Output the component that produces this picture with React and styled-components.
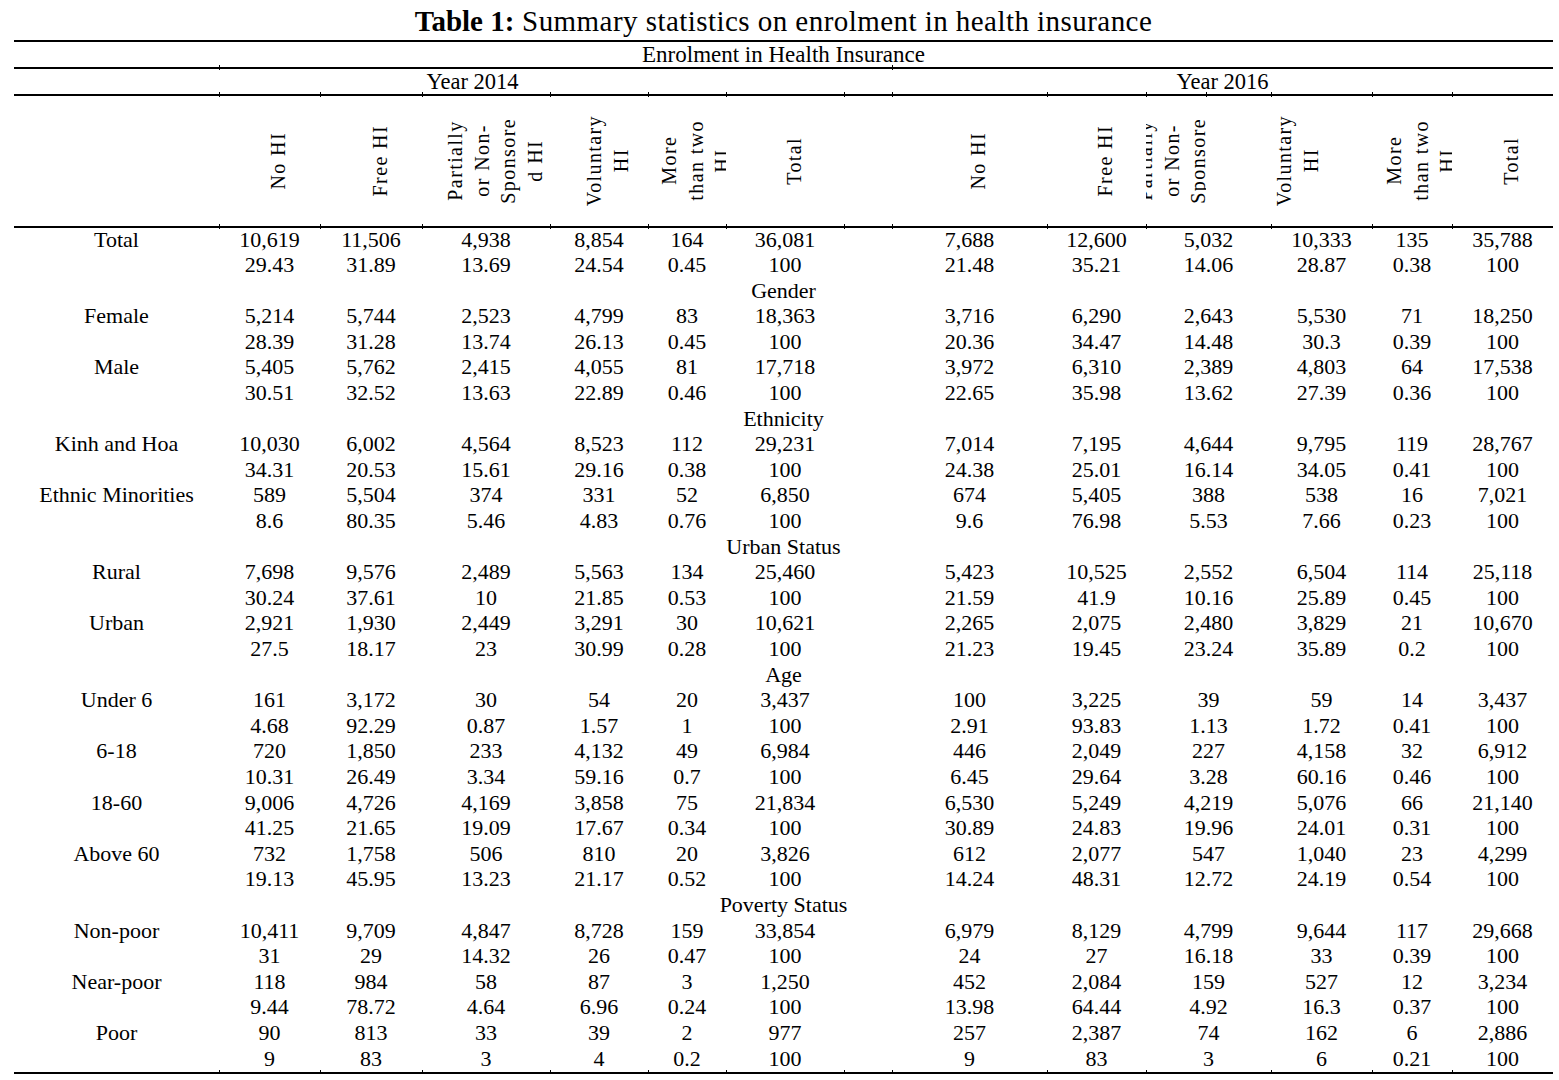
import styled, { createGlobalStyle } from 'styled-components';

const GlobalStyle = createGlobalStyle`
  body {
    margin: 0;
    background: #ffffff;
    color: #000000;
    font-family: 'Liberation Serif', 'Times New Roman', serif;
  }
`;

const DATA_COLS = [205, 101, 102, 128, 98, 78, 118, 48, 155, 99, 125, 101, 80, 101];
const HEAD_COLS = [205, 101, 102, 128, 98, 78, 118, 48, 155, 99, 60, 166, 80, 101];
const HEAD_RULE = [205, 101, 102, 128, 98, 78, 118, 48, 155, 99, 60, 65, 101, 80, 101];
const YEAR_COLS = [205, 507, 166, 661];
const YEAR_RULE = [205, 673, 661];

const toTemplate = (cols) => cols.map((w) => `${w}px`).join(' ');

const Page = styled.div`
  box-sizing: border-box;
  width: 1553px;
  padding-left: 14px;
`;

const Title = styled.div`
  box-sizing: border-box;
  height: 40px;
  padding-top: 7px;
  margin-left: -14px;
  width: 1567px;
  text-align: center;
  font-size: 29px;
  line-height: 29px;
  letter-spacing: 0.45px;
  white-space: nowrap;

  b {
    font-weight: 700;
    letter-spacing: 0;
  }
`;

const RuleBar = styled.div`
  display: grid;
  grid-template-columns: ${(p) => p.$template};
  height: 1.5px;
  background: #000;
`;

const Tick = styled.span`
  align-self: start;
  height: 5px;
  margin-top: -2px;
  border-left: 1px solid ${(p) => (p.$on ? '#000' : 'transparent')};
`;

const Rule = ({ cuts }) => (
  <RuleBar $template={toTemplate(cuts)}>
    {cuts.map((w, i) => (
      <Tick key={i} $on={i > 0} />
    ))}
  </RuleBar>
);

const SpanRow = styled.div`
  height: 25.5px;
  line-height: 25.5px;
  text-align: center;
  font-size: 23px;
`;

const YearRow = styled.div`
  display: grid;
  grid-template-columns: ${toTemplate(YEAR_COLS)};
  height: 25.5px;
  line-height: 25.5px;
  font-size: 22.5px;
  text-align: center;
`;

const HeadRow = styled.div`
  display: grid;
  grid-template-columns: ${toTemplate(HEAD_COLS)};
  height: 130.5px;
`;

const HeadCell = styled.div`
  box-sizing: border-box;
  display: flex;
  justify-content: center;
  align-items: center;
  overflow: hidden;
  padding-left: 18px;
`;

const Rotated = styled.div`
  flex-shrink: 0;
  writing-mode: vertical-rl;
  transform: rotate(180deg);
  text-align: center;
  font-size: 20px;
  line-height: 26.6px;
  letter-spacing: 1.4px;
  white-space: nowrap;
`;

const DataRow = styled.div`
  box-sizing: border-box;
  display: grid;
  grid-template-columns: ${toTemplate(DATA_COLS)};
  height: 25.6px;
  padding-bottom: 2px;
  line-height: 23.6px;
  font-size: 22px;
`;

const Cell = styled.div`
  text-align: center;
  white-space: nowrap;
`;

const SectionRow = styled.div`
  box-sizing: border-box;
  height: 25.6px;
  padding-bottom: 2px;
  line-height: 23.6px;
  font-size: 22px;
  text-align: center;
`;

const headers = [
  ['No HI'],
  ['Free HI'],
  ['Partially', 'or Non-', 'Sponsore', 'd HI'],
  ['Voluntary', 'HI'],
  ['More', 'than two', 'HI'],
  ['Total'],
];

const rows = [
  { label: 'Total', a: ['10,619', '11,506', '4,938', '8,854', '164', '36,081'], b: ['7,688', '12,600', '5,032', '10,333', '135', '35,788'] },
  { a: ['29.43', '31.89', '13.69', '24.54', '0.45', '100'], b: ['21.48', '35.21', '14.06', '28.87', '0.38', '100'] },
  { section: 'Gender' },
  { label: 'Female', a: ['5,214', '5,744', '2,523', '4,799', '83', '18,363'], b: ['3,716', '6,290', '2,643', '5,530', '71', '18,250'] },
  { a: ['28.39', '31.28', '13.74', '26.13', '0.45', '100'], b: ['20.36', '34.47', '14.48', '30.3', '0.39', '100'] },
  { label: 'Male', a: ['5,405', '5,762', '2,415', '4,055', '81', '17,718'], b: ['3,972', '6,310', '2,389', '4,803', '64', '17,538'] },
  { a: ['30.51', '32.52', '13.63', '22.89', '0.46', '100'], b: ['22.65', '35.98', '13.62', '27.39', '0.36', '100'] },
  { section: 'Ethnicity' },
  { label: 'Kinh and Hoa', a: ['10,030', '6,002', '4,564', '8,523', '112', '29,231'], b: ['7,014', '7,195', '4,644', '9,795', '119', '28,767'] },
  { a: ['34.31', '20.53', '15.61', '29.16', '0.38', '100'], b: ['24.38', '25.01', '16.14', '34.05', '0.41', '100'] },
  { label: 'Ethnic Minorities', a: ['589', '5,504', '374', '331', '52', '6,850'], b: ['674', '5,405', '388', '538', '16', '7,021'] },
  { a: ['8.6', '80.35', '5.46', '4.83', '0.76', '100'], b: ['9.6', '76.98', '5.53', '7.66', '0.23', '100'] },
  { section: 'Urban Status' },
  { label: 'Rural', a: ['7,698', '9,576', '2,489', '5,563', '134', '25,460'], b: ['5,423', '10,525', '2,552', '6,504', '114', '25,118'] },
  { a: ['30.24', '37.61', '10', '21.85', '0.53', '100'], b: ['21.59', '41.9', '10.16', '25.89', '0.45', '100'] },
  { label: 'Urban', a: ['2,921', '1,930', '2,449', '3,291', '30', '10,621'], b: ['2,265', '2,075', '2,480', '3,829', '21', '10,670'] },
  { a: ['27.5', '18.17', '23', '30.99', '0.28', '100'], b: ['21.23', '19.45', '23.24', '35.89', '0.2', '100'] },
  { section: 'Age' },
  { label: 'Under 6', a: ['161', '3,172', '30', '54', '20', '3,437'], b: ['100', '3,225', '39', '59', '14', '3,437'] },
  { a: ['4.68', '92.29', '0.87', '1.57', '1', '100'], b: ['2.91', '93.83', '1.13', '1.72', '0.41', '100'] },
  { label: '6-18', a: ['720', '1,850', '233', '4,132', '49', '6,984'], b: ['446', '2,049', '227', '4,158', '32', '6,912'] },
  { a: ['10.31', '26.49', '3.34', '59.16', '0.7', '100'], b: ['6.45', '29.64', '3.28', '60.16', '0.46', '100'] },
  { label: '18-60', a: ['9,006', '4,726', '4,169', '3,858', '75', '21,834'], b: ['6,530', '5,249', '4,219', '5,076', '66', '21,140'] },
  { a: ['41.25', '21.65', '19.09', '17.67', '0.34', '100'], b: ['30.89', '24.83', '19.96', '24.01', '0.31', '100'] },
  { label: 'Above 60', a: ['732', '1,758', '506', '810', '20', '3,826'], b: ['612', '2,077', '547', '1,040', '23', '4,299'] },
  { a: ['19.13', '45.95', '13.23', '21.17', '0.52', '100'], b: ['14.24', '48.31', '12.72', '24.19', '0.54', '100'] },
  { section: 'Poverty Status' },
  { label: 'Non-poor', a: ['10,411', '9,709', '4,847', '8,728', '159', '33,854'], b: ['6,979', '8,129', '4,799', '9,644', '117', '29,668'] },
  { a: ['31', '29', '14.32', '26', '0.47', '100'], b: ['24', '27', '16.18', '33', '0.39', '100'] },
  { label: 'Near-poor', a: ['118', '984', '58', '87', '3', '1,250'], b: ['452', '2,084', '159', '527', '12', '3,234'] },
  { a: ['9.44', '78.72', '4.64', '6.96', '0.24', '100'], b: ['13.98', '64.44', '4.92', '16.3', '0.37', '100'] },
  { label: 'Poor', a: ['90', '813', '33', '39', '2', '977'], b: ['257', '2,387', '74', '162', '6', '2,886'] },
  { a: ['9', '83', '3', '4', '0.2', '100'], b: ['9', '83', '3', '6', '0.21', '100'] },
];

const HeadLabel = ({ lines }) => (
  <HeadCell>
    <Rotated>
      {lines.map((line, i) => (
        <span key={i}>
          {i > 0 && <br />}
          {line}
        </span>
      ))}
    </Rotated>
  </HeadCell>
);

export default function App() {
  return (
    <Page>
      <GlobalStyle />
      <Title>
        <b>Table 1:</b> Summary statistics on enrolment in health insurance
      </Title>
      <Rule cuts={[1539]} />
      <SpanRow>Enrolment in Health Insurance</SpanRow>
      <Rule cuts={YEAR_RULE} />
      <YearRow>
        <span />
        <span>Year 2014</span>
        <span />
        <span>Year 2016</span>
      </YearRow>
      <Rule cuts={HEAD_RULE} />
      <HeadRow>
        <HeadCell />
        {headers.map((h, i) => (
          <HeadLabel key={`a${i}`} lines={h} />
        ))}
        <HeadCell />
        {headers.map((h, i) => (
          <HeadLabel key={`b${i}`} lines={h} />
        ))}
      </HeadRow>
      <Rule cuts={DATA_COLS} />
      {rows.map((r, i) =>
        r.section ? (
          <SectionRow key={i}>{r.section}</SectionRow>
        ) : (
          <DataRow key={i}>
            <Cell>{r.label || ''}</Cell>
            {r.a.map((v, j) => (
              <Cell key={`a${j}`}>{v}</Cell>
            ))}
            <Cell />
            {r.b.map((v, j) => (
              <Cell key={`b${j}`}>{v}</Cell>
            ))}
          </DataRow>
        )
      )}
      <Rule cuts={DATA_COLS} />
    </Page>
  );
}
